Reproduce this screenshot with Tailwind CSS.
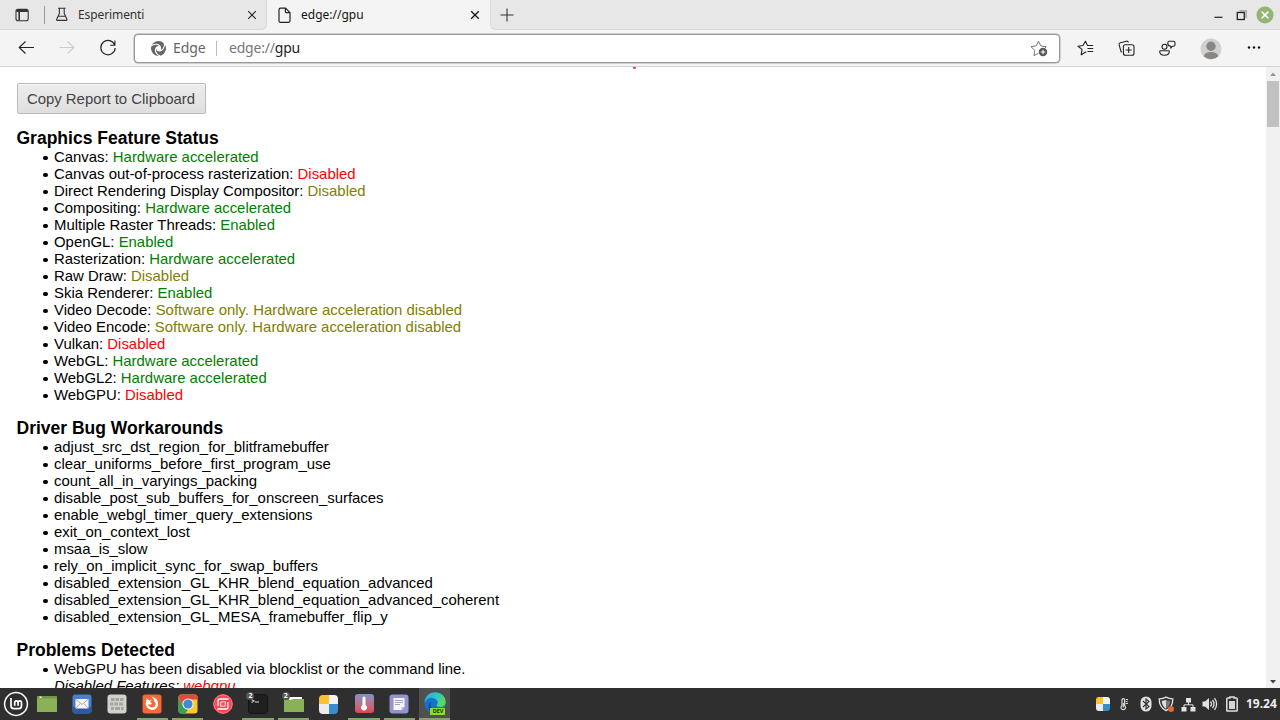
<!DOCTYPE html>
<html lang="it">

<head>
    <meta charset="utf-8">
    <script src="https://cdn.jsdelivr.net/npm/@tailwindcss/browser@4"></script>
    <title>edge://gpu</title>
</head>

<body class="overflow-hidden">
    <div class="flex flex-col w-[1280px] h-[720px] overflow-hidden bg-white font-['Noto_Sans',sans-serif]">

        <!-- tabs -->
        <div class="flex h-[30px] bg-[#f4f4f4] shrink-0">
            <div class="flex items-center w-[267px] h-[30px] bg-[#e7e7e7] border-b border-r border-[#d9d9d9] rounded-br-md">
                <svg class="ml-[15px] shrink-0" width="14" height="14" viewBox="0 0 14 14" fill="none" stroke="#333" stroke-width="1.1">
                    <rect x="1" y="1.4" width="12.2" height="11.4" rx="2" />
                    <path d="M1.5 3h11.2" stroke-width="2" />
                    <path d="M4.2 4v8.4" stroke-width="1.6" />
                </svg>
                <div class="ml-[15px] w-px h-[18px] bg-[#999]"></div>
                <svg class="ml-[10px] shrink-0" width="14" height="15" viewBox="0 0 14 15" fill="none" stroke="#333" stroke-width="1.1">
                    <path d="M3 1.2h7.5M4.4 1.2v5.3L1.7 12.2q-.3 1.2.8 1.2h8.6q1.1 0 .8-1.2L9.2 6.5V1.2M3.6 9.3h6.4" />
                </svg>
                <div class="ml-[9px] w-[169px] text-[12px] leading-4 text-[#333] tracking-[-0.1px]">Esperimenti</div>
                <svg class="shrink-0" width="10" height="10" viewBox="0 0 10 10" stroke="#222" stroke-width="1.1">
                    <path d="M1.2 1.2l7.6 7.6M8.8 1.2L1.2 8.8" />
                </svg>
            </div>
            <div class="flex items-center w-[223px] h-[30px] bg-[#f4f4f4]">
                <svg class="ml-[11px] shrink-0" width="13" height="17" viewBox="0 0 13 17" fill="none" stroke="#222" stroke-width="1.2" stroke-linejoin="round">
                    <path d="M2.6 1.2h5L12 5.6v8.2q0 1.5-1.5 1.5h-8Q1 15.3 1 13.8V2.7Q1 1.2 2.6 1.2zM7.4 1.2v3.2q0 1.3 1.3 1.3H12" />
                </svg>
                <div class="ml-[10px] w-[169px] text-[12px] leading-4 text-[#111]">edge://gpu</div>
                <svg class="shrink-0" width="10" height="10" viewBox="0 0 10 10" stroke="#111" stroke-width="1.3">
                    <path d="M1.2 1.2l7.6 7.6M8.8 1.2L1.2 8.8" />
                </svg>
            </div>
            <div class="flex flex-1 items-center bg-[#e7e7e7] border-b border-l border-[#d9d9d9] rounded-bl-md">
                <svg class="ml-[9px]" width="14" height="14" viewBox="0 0 14 14" stroke="#333" stroke-width="1.1">
                    <path d="M7 .5v13M.5 7h13" />
                </svg>
                <svg class="ml-auto mr-[6px]" width="62" height="20" viewBox="0 0 62 20" fill="none">
                    <path d="M2.5 12.3h8" stroke="#333" stroke-width="1.3" />
                    <path d="M27.5 5.9h6.7v7" stroke="#999" stroke-width="1.2" />
                    <rect x="25.3" y="7.5" width="7" height="7" stroke="#222" stroke-width="1.3" />
                    <circle cx="53" cy="10" r="8.5" fill="#92b572" />
                    <path d="M49.6 6.6l6.8 6.8M56.4 6.6l-6.8 6.8" stroke="#fff" stroke-width="1.5" />
                </svg>
            </div>
        </div>

        <!-- toolbar -->
        <div class="flex items-center h-[37px] bg-[#f4f4f4] border-b border-[#d3d3d3] shrink-0">
            <svg class="ml-[18px]" width="17" height="14" viewBox="0 0 17 14" fill="none" stroke="#222" stroke-width="1.1">
                <path d="M16 6.5H1.2M7.5 .5l-6.3 6 6.3 6" />
            </svg>
            <svg class="ml-[24px]" width="17" height="14" viewBox="0 0 17 14" fill="none" stroke="#ccc" stroke-width="1.1">
                <path d="M.5 6.5h14.3M8.500 .5l6.3 6-6.3 6" />
            </svg>
            <svg class="ml-[23px]" width="18" height="18" viewBox="0 0 18 18" fill="none" stroke="#222" stroke-width="1.1">
                <path d="M15.8 6.200A7.200 7.200 0 1 0 16.200 9M15.900 1.500v4.700h-4.700" />
            </svg>
            <div class="flex items-center ml-[17px] w-[926px] h-[29px] bg-white border border-[#999] rounded-[4px] shadow-[0_0_0_0.5px_#aaa]">
                <svg class="ml-[15px]" width="17" height="17" viewBox="0 0 17 17" fill="none" stroke="#fff" stroke-width="1.1">
                    <circle cx="8.5" cy="8.5" r="7.5" fill="#666" stroke="none" />
                    <circle cx="8.5" cy="8.5" r="2.5" fill="#fff" stroke="none" />
                    <path d="M10.600 8.500Q10.500 5 6.500 4.300 3.500 3.900 .8 6.200" />
                    <path d="M10.600 8.500Q10.500 5 6.500 4.300 3.500 3.900 .8 6.200" transform="rotate(120 8.5 8.5)" />
                    <path d="M10.600 8.500Q10.500 5 6.500 4.300 3.500 3.900 .8 6.200" transform="rotate(240 8.5 8.5)" />
                </svg>
                <div class="ml-[6px] w-[43px] text-[14px] leading-5 tracking-[-0.1px] text-[#666]">Edge</div>
                <div class="w-px h-[15px] bg-[#bbb]"></div>
                <div class="ml-[12px] text-[14px] leading-5 tracking-[-0.2px] text-[#222]"><span class="text-[#777]">edge://</span>gpu</div>
                <svg class="ml-auto mr-[11px]" width="18" height="17" viewBox="0 0 18 17" fill="none">
                    <path d="M8.500 13.200l-4.600 2.400.9-5.200L1 6.700l5.200-.8L8.500 1.200l2.300 4.700 5.400.8-2 2" stroke="#777" stroke-width="1" stroke-linejoin="round" />
                    <circle cx="13" cy="12" r="4.200" fill="#555" />
                    <path d="M13 9.700v4.600M10.700 12h4.600" stroke="#fff" stroke-width="1.1" />
                </svg>
            </div>
            <div class="flex justify-center w-[41px] ml-[5px]">
                <svg width="17" height="17" viewBox="0 0 17 17" fill="none" stroke="#222" stroke-width="1.1" stroke-linejoin="round">
                    <path d="M9.200 11.800l-5 3 .8-5.400L1 6.300l5-.8L8.400 1.200l2.100 4.300h5.700M10.500 8.500h5.700M10.500 11.500h5.700" />
                </svg>
            </div>
            <div class="flex justify-center w-[41px]">
                <svg width="17" height="17" viewBox="0 0 17 17" fill="none" stroke="#222" stroke-width="1.1">
                    <path d="M3.700 12.200Q3 11.700 2.800 10.800L1.100 4.700Q.8 3.200 2.300 2.800L8.500 1.200Q10 .9 10.500 2.400" />
                    <rect x="5.4" y="4.7" width="10.6" height="10.6" rx="2" />
                    <path d="M10.700 7v6M7.700 10h6" />
                </svg>
            </div>
            <div class="flex justify-center w-[41px]">
                <svg width="17" height="17" viewBox="0 0 17 17" fill="none" stroke="#222" stroke-width="1.1" stroke-linejoin="round">
                    <circle cx="5.5" cy="6.8" r="2.5" />
                    <path d="M1.500 10.800h8q.8 0 .8.800 0 3.700-4.800 3.700T.7 11.600q0-.8.800-.800zM9.800 1.200h4.700q1.500 0 1.500 1.500v2q0 1.500-1.500 1.500h-1l-1.700 1.900v-1.900q-3-.2-3-2.800 0-2.200 1-2.200z" />
                </svg>
            </div>
            <div class="flex justify-center w-[45px] pt-px">
                <svg width="22" height="22" viewBox="0 0 22 22">
                    <circle cx="11" cy="11" r="10.5" fill="#d2d0ce" />
                    <circle cx="11" cy="8.3" r="4.7" fill="#8a8684" />
                    <path d="M3.700 18.200Q5 14 11 14t7.300 4.200A10.500 10.500 0 0 1 3.700 18.200z" fill="#8a8684" />
                </svg>
            </div>
            <div class="flex justify-center w-[41px]">
                <svg width="14" height="4" viewBox="0 0 14 4" fill="#111">
                    <circle cx="2" cy="1.5" r="1.2" />
                    <circle cx="7" cy="1.5" r="1.2" />
                    <circle cx="12" cy="1.5" r="1.2" />
                </svg>
            </div>
        </div>

        <!-- page -->
        <div class="relative flex h-[621px] shrink-0 overflow-hidden">
            <div class="absolute left-[633px] top-0 w-[3px] h-[2px] bg-[#f33] rounded-b-sm"></div>
            <div class="flex-1 pt-4 pl-[16.5px] overflow-hidden font-['Liberation_Sans',sans-serif] text-[14.92px] leading-[17px] text-black">
                <button class="block w-[189px] h-[31px] border border-[#b9b9b9] rounded-[2px] bg-linear-to-b from-[#ededed] to-[#dedede] text-[#444] whitespace-nowrap shadow-[inset_0_1px_1px_#fafafa]">Copy Report to Clipboard</button>

                <h3 class="mt-[14px] h-5 text-[17.5px] leading-5 font-bold">Graphics Feature Status</h3>
                <ul class="pl-[37.5px] *:before:inline-block *:before:size-[4.5px] *:before:-ml-[11px] *:before:mr-[6.5px] *:before:mb-[2px] *:before:align-baseline *:before:rounded-full *:before:bg-black">
                    <li>Canvas: <span class="text-[#008000]">Hardware accelerated</span></li>
                    <li>Canvas out-of-process rasterization: <span class="text-[#ff0000]">Disabled</span></li>
                    <li>Direct Rendering Display Compositor: <span class="text-[#808000]">Disabled</span></li>
                    <li>Compositing: <span class="text-[#008000]">Hardware accelerated</span></li>
                    <li>Multiple Raster Threads: <span class="text-[#008000]">Enabled</span></li>
                    <li>OpenGL: <span class="text-[#008000]">Enabled</span></li>
                    <li>Rasterization: <span class="text-[#008000]">Hardware accelerated</span></li>
                    <li>Raw Draw: <span class="text-[#808000]">Disabled</span></li>
                    <li>Skia Renderer: <span class="text-[#008000]">Enabled</span></li>
                    <li>Video Decode: <span class="text-[#808000]">Software only. Hardware acceleration disabled</span></li>
                    <li>Video Encode: <span class="text-[#808000]">Software only. Hardware acceleration disabled</span></li>
                    <li>Vulkan: <span class="text-[#ff0000]">Disabled</span></li>
                    <li>WebGL: <span class="text-[#008000]">Hardware accelerated</span></li>
                    <li>WebGL2: <span class="text-[#008000]">Hardware accelerated</span></li>
                    <li>WebGPU: <span class="text-[#ff0000]">Disabled</span></li>
                </ul>

                <h3 class="mt-[15px] h-5 text-[17.5px] leading-5 font-bold">Driver Bug Workarounds</h3>
                <ul class="pl-[37.5px] *:before:inline-block *:before:size-[4.5px] *:before:-ml-[11px] *:before:mr-[6.5px] *:before:mb-[2px] *:before:align-baseline *:before:rounded-full *:before:bg-black">
                    <li>adjust_src_dst_region_for_blitframebuffer</li>
                    <li>clear_uniforms_before_first_program_use</li>
                    <li>count_all_in_varyings_packing</li>
                    <li>disable_post_sub_buffers_for_onscreen_surfaces</li>
                    <li>enable_webgl_timer_query_extensions</li>
                    <li>exit_on_context_lost</li>
                    <li>msaa_is_slow</li>
                    <li>rely_on_implicit_sync_for_swap_buffers</li>
                    <li>disabled_extension_GL_KHR_blend_equation_advanced</li>
                    <li>disabled_extension_GL_KHR_blend_equation_advanced_coherent</li>
                    <li>disabled_extension_GL_MESA_framebuffer_flip_y</li>
                </ul>

                <h3 class="mt-[15px] h-5 text-[17.5px] leading-5 font-bold">Problems Detected</h3>
                <ul class="pl-[37.5px] *:before:inline-block *:before:size-[4.5px] *:before:-ml-[11px] *:before:mr-[6.5px] *:before:mb-[2px] *:before:align-baseline *:before:rounded-full *:before:bg-black">
                    <li>WebGPU has been disabled via blocklist or the command line.<br>
                        <i>Disabled Features: <span class="text-[#ff0000]">webgpu</span></i></li>
                </ul>
            </div>
            <div class="flex flex-col items-center w-[14px] bg-[#f1f1f1]">
                <svg width="14" height="14" viewBox="0 0 14 14"><path d="M4 9l3-3.500L10 9z" fill="#999" /></svg>
                <div class="w-[12px] h-[46px] bg-[#c1c1c1]"></div>
                <svg class="mt-auto" width="14" height="14" viewBox="0 0 14 14"><path d="M4 6l3 3.500L10 6z" fill="#444" /></svg>
            </div>
        </div>

        <!-- taskbar -->
        <div class="flex h-8 bg-[#2f2f2f] shrink-0">
            <div class="flex items-center justify-center w-[31px]">
                <svg width="26" height="26" viewBox="0 0 26 26" fill="none" stroke="#fff">
                    <circle cx="13" cy="13" r="11.4" stroke-width="1.5" />
                    <path d="M8 7v7.700q0 3 3 3h4.500q3 0 3-3v-3q0-1.800-1.700-1.800t-1.700 1.800v3M15.100 11.700q0-1.800-1.700-1.800t-1.700 1.800v3" stroke-width="1.7" />
                </svg>
            </div>
            <div class="flex items-center justify-center w-[32px]">
                <svg width="20" height="18" viewBox="0 0 20 18">
                    <rect y="1" width="20" height="16" fill="#8bb158" />
                    <path d="M0 1h20v2.500H0z" fill="#739848" />
                    <path d="M2.500 1.500h2v1.500h-2z" fill="#fff" />
                </svg>
            </div>
            <div class="flex gap-[3.8px] ml-[3px]">
                <div class="flex items-center justify-center w-[31.5px]">
                    <svg width="20" height="20" viewBox="0 0 20 20">
                        <rect x=".5" y=".5" width="19" height="19" rx="3" fill="#4a7fd0" />
                        <path d="M.5 13h19v4a2.500 2.500 0 0 1-2.500 2.500H3A2.500 2.500 0 0 1 .5 17z" fill="#3059a2" />
                        <rect x="3.5" y="5" width="13" height="9.5" fill="#f4f4f4" />
                        <path d="M3.500 5l6.500 5.500L16.500 5M3.500 14.500l4.700-5M16.500 14.500l-4.700-5" fill="none" stroke="#9a9a9a" stroke-width=".8" />
                    </svg>
                </div>
                <div class="flex items-center justify-center w-[31.5px]">
                    <svg width="20" height="20" viewBox="0 0 20 20">
                        <rect x=".5" y=".5" width="19" height="19" rx="3" fill="#d1d1cd" />
                        <path d="M4 4h3.500v3H4zM8.500 4H12v3H8.500zM13 4h3.500v3H13zM3 8.500h3.500v3H3zM7.500 8.500H11v3H7.500zM12 8.500h4v3h-4zM4 13h3v3H4zM8 13h5v3H8zM14 13h2.500v3H14z" fill="#a5a5a1" />
                    </svg>
                </div>
                <div class="flex items-center justify-center w-[31.5px] border-b-2 border-[#86a36a] pt-0.5">
                    <svg width="20" height="20" viewBox="0 0 20 20">
                        <rect x=".5" y=".5" width="19" height="19" rx="3" fill="#f66936" />
                        <path d="M5.600 6.600q-1.600 3 .2 5.800 1.700 2.600 4.700 2.300 3.600-.5 4.300-3.800.4-2.800-1.300-4.900" fill="none" stroke="#fff" stroke-width="2.4" />
                        <path d="M4.600 4.300l2.700 2.200q1-.9 2.500-1.100L8 8l2 1.200-1.300 1.500L5 10zM9.300 2.500q5 1 5.800 4.800l-2 1.700Q12.500 5 9.300 2.500z" fill="#fff" />
                    </svg>
                </div>
                <div class="flex items-center justify-center w-[31.5px] border-b-2 border-[#86a36a] pt-0.5">
                    <svg width="20" height="20" viewBox="0 0 20 20">
                        <rect x=".5" y=".5" width="19" height="19" rx="3" fill="#fbc92e" />
                        <path d="M.5 3A2.500 2.500 0 0 1 3 .5h14A2.500 2.500 0 0 1 19.500 3v2.500H10L5.500 12 .5 4z" fill="#e04a3c" />
                        <path d="M.5 4l5 8.500 4.500 2.700-2.500 4.300H3A2.500 2.500 0 0 1 .5 17z" fill="#35a257" />
                        <circle cx="10" cy="10" r="5.6" fill="#f5f5f5" />
                        <circle cx="10" cy="10" r="4.6" fill="#4487d4" />
                    </svg>
                </div>
                <div class="flex items-center justify-center w-[31.5px]">
                    <svg width="20" height="20" viewBox="0 0 20 20" fill="none">
                        <circle cx="10" cy="10" r="9.7" fill="#fa4557" />
                        <circle cx="10" cy="10" r="9.2" stroke="#ff8088" />
                        <path d="M5 12V7q0-2 2-2h8.500M15 8v5q0 2-2 2H4.500" stroke="#fff" stroke-width="1.3" />
                        <path d="M7.700 12.300V9q0-1.200 1.200-1.200H12.300V11q0 1.300-1.300 1.300z" stroke="#ffe0e2" stroke-width="1.1" />
                    </svg>
                </div>
                <div class="relative flex items-center justify-center w-[31.5px] border-b-2 border-[#86a36a] pt-0.5">
                    <svg width="20" height="20" viewBox="0 0 20 20">
                        <rect x=".5" y=".5" width="19" height="19" rx="3" fill="#202020" stroke="#151515" />
                        <path d="M3.500 5.500L6 7 3.500 8.500M7 8h4" fill="none" stroke="#ddd" stroke-width="1.1" />
                    </svg>
                    <div class="absolute left-[4px] top-[4px] w-[8px] h-[8px] rounded-full bg-[#555] text-[7px] leading-[8px] font-bold text-white text-center">2</div>
                </div>
                <div class="relative flex items-center justify-center w-[31.5px] border-b-2 border-[#86a36a] pt-0.5">
                    <svg width="20" height="18" viewBox="0 0 20 18">
                        <path d="M0 2.500h7L8.500 4H18v4H0z" fill="#6f9145" />
                        <path d="M5 2h13v4H5z" fill="#fff" />
                        <path d="M0 5h7l1.500-1H20v13H0z" fill="#8bb158" />
                    </svg>
                    <div class="absolute left-[4px] top-[4px] w-[8px] h-[8px] rounded-full bg-[#555] text-[7px] leading-[8px] font-bold text-white text-center">2</div>
                </div>
                <div class="flex items-center justify-center w-[31.5px]">
                    <div class="grid grid-cols-2 w-[19px] h-[19px] rounded-[4px] overflow-hidden">
                        <div class="bg-[#fcc331]"></div>
                        <div class="bg-[#f3f3f3]"></div>
                        <div class="bg-[#ececec]"></div>
                        <div class="bg-[#3a8dcc]"></div>
                    </div>
                </div>
                <div class="flex items-center justify-center w-[31.5px] border-b-2 border-[#86a36a]">
                    <div class="flex items-center justify-center w-[19px] h-[19px] mt-px rounded-[3px] bg-linear-to-b from-[#7c91ca] to-[#e1424e]">
                        <svg width="8" height="15" viewBox="0 0 8 15">
                            <path d="M2.500 2a1.500 1.500 0 0 1 3 0v7a3 3 0 1 1-3 0z" fill="#fff" />
                        </svg>
                    </div>
                </div>
                <div class="flex items-center justify-center w-[31.5px] border-b-2 border-[#86a36a] pt-0.5">
                    <svg width="20" height="20" viewBox="0 0 20 20">
                        <rect x=".5" y=".5" width="19" height="19" rx="3" fill="#9493d1" />
                        <path d="M4.500 4h11v9L12.500 16h-8z" fill="#f5f5fa" />
                        <path d="M6 6.500h8M6 8.500h8M6 10.500h5" stroke="#a3a1cc" stroke-width="1.1" />
                        <path d="M12.500 16v-3h3z" fill="#c1c0e0" />
                    </svg>
                </div>
                <div class="relative flex items-center justify-center w-[31.5px] bg-[#505050] border-b-2 border-[#86a36a]">
                    <svg width="24" height="24" viewBox="0 0 24 24">
                        <defs>
                            <linearGradient id="wave" x1="0" y1="0" x2="1" y2=".5">
                                <stop offset="0" stop-color="#2aa7e4" />
                                <stop offset=".55" stop-color="#2fc5cc" />
                                <stop offset="1" stop-color="#5bd957" />
                            </linearGradient>
                        </defs>
                        <circle cx="12" cy="12" r="10.5" fill="#1673cb" />
                        <path d="M1.500 12A10.500 10.500 0 0 1 12 1.200q9.500.3 10.700 9.300.2 5.300-5 5.500-4.500 0-4.200-1.700 2-2.200.5-5Q11.500 6.300 7.800 6.800 3.200 7.500 1.500 12z" fill="url(#wave)" />
                        <path d="M8 11q-1.500 6 3.500 9.500 3.300 2 7.500.2-1.500 1.600-5 1.900Q7 22.500 5.500 17 4.700 12.500 8 11z" fill="#124f9c" />
                    </svg>
                    <div class="absolute left-[11.5px] top-[20px] w-[15px] h-[6.5px] bg-[#86e414] text-[5.5px] leading-[6.5px] font-bold text-[#163000] text-center">DEV</div>
                </div>
            </div>

            <!-- tray -->
            <div class="flex items-center ml-auto">
                <div class="grid grid-cols-2 w-[14px] h-[14px] mr-[7px] rounded-[3px] overflow-hidden">
                    <div class="bg-[#fcc331]"></div>
                    <div class="bg-[#f3f3f3]"></div>
                    <div class="bg-[#ececec]"></div>
                    <div class="bg-[#3a8dcc]"></div>
                </div>
                <svg class="mr-[9px]" width="14" height="14" viewBox="0 0 14 14" fill="none" stroke="#e3ddd0" stroke-width="1.2">
                    <path d="M5 3a1.300 1.300 0 0 1 2.600 0v5.500a2.300 2.300 0 1 1-2.600 0zM8.800 2.500h2.200M8.800 4.500h1.700M8.800 6.500h2.200" />
                    <path d="M6.300 6v4.500" />
                </svg>
                <svg class="mr-[6px]" width="12" height="16" viewBox="0 0 12 16">
                    <rect x=".5" y=".5" width="11" height="15" rx="5.5" fill="#e2e2e2" />
                    <path d="M3 5l6 5.500L6 13V3l3 2.500L3 11" fill="none" stroke="#2f2f2f" stroke-width="1.1" />
                </svg>
                <svg class="mr-[6px]" width="17" height="16" viewBox="0 0 17 16">
                    <path d="M8 1.200q3 1.700 6.700 1.700.4 8-6.700 11.800Q.9 10.900 1.300 2.900 5 2.900 8 1.200z" fill="none" stroke="#e2e2e2" stroke-width="1.4" />
                    <path d="M8 3.700q2 1 4.300 1.100 0 5.400-4.300 8z" fill="#777" />
                    <path d="M8 3.700q-2 1-4.300 1.100 0 5.400 4.300 8z" fill="#ddd" />
                    <circle cx="13" cy="12.9" r="3" fill="#e66a35" />
                </svg>
                <svg class="mr-[6px]" width="15" height="15" viewBox="0 0 15 15" fill="#e2e2e2">
                    <path d="M5 1h5v4.500H5zM.5 10h5v4.500h-5zM9.500 10h5v4.500h-5z" />
                    <path d="M7.500 5v3M3 10.500V7.800h9v2.700" fill="none" stroke="#e2e2e2" />
                </svg>
                <svg class="mr-[8px]" width="16" height="14" viewBox="0 0 16 14" fill="none" stroke="#e2e2e2" stroke-width="1.3">
                    <path d="M.5 4.500H3L7 1v12L3 9.500H.5z" fill="#e2e2e2" stroke="none" />
                    <path d="M8.500 4.500q2 2.500 0 5M10.500 2.800q3 4.200 0 8.400M12.500 1q4.200 6 0 12" />
                </svg>
                <svg class="mr-[8px]" width="12" height="16" viewBox="0 0 12 16" fill="none">
                    <path d="M4 2V1h4v1h2.300q.9 0 .9.900v11.300q0 .9-.9.900H1.700q-.9 0-.9-.9V2.900q0-.9.900-.9z" stroke="#e2e2e2" stroke-width="1.5" />
                    <path d="M3 5h6v8H3z" fill="#d5d5d5" />
                </svg>
                <div class="w-[34px] text-[12px] leading-4 font-bold text-[#eee] whitespace-nowrap">19.24</div>
            </div>
        </div>
    </div>
</body>

</html>
